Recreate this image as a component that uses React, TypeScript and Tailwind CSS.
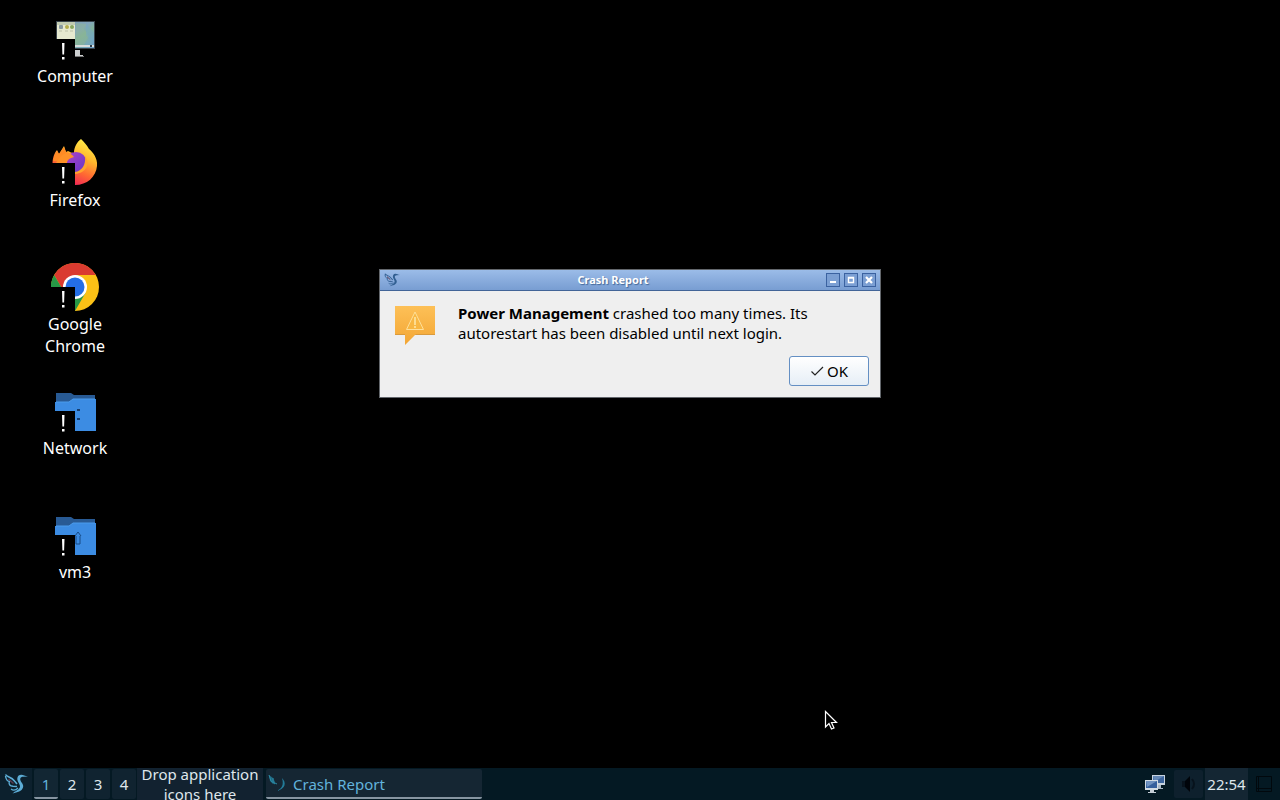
import type { ReactNode } from 'react';

function Bird({ className }: { className: string }) {
  return (
    <svg viewBox="0 0 24 24" className={className} fill="none" aria-hidden="true">
      <path d="M24 4.500L19.500 4.700C16.500 4.800 15.800 6.300 16.500 8.500C17.500 11 20 12.500 19 15.500C17.800 19.500 13.500 20 8.500 21.500C11 19 14.800 18 15.800 15.500C16.700 13 14.500 11.500 13.600 8.500C12.700 5.500 14.200 2.500 17.300 2.700C19.500 2.800 20.800 4 24 4.500Z" fill="currentColor" />
      <path d="M1.500 2.500C3 5.500 7 4.500 10.500 9L13 12" stroke="currentColor" strokeWidth="1.600" />
      <path d="M1.500 4C2 8 3 9 5.500 9.500C4 12 6 14 9 14.300L13 14.500" stroke="currentColor" strokeWidth="1.400" />
      <path d="M4.500 7L9.500 11.500" stroke="#5d394d" strokeWidth="1.500" />
      <path d="M7 17C9 18.500 12 18 14 16" stroke="currentColor" strokeWidth="1.200" />
    </svg>
  );
}

function Untrusted() {
  return (
    <>
      <rect x="0" y="24" width="24" height="24" fill="#000" />
      <path d="M11 28H13.500L13.100 39.500H11.400ZM11 42H13.500V44.500H11Z" fill="#fff" />
    </>
  );
}

function Icon({ children }: { children: ReactNode }) {
  return (
    <svg viewBox="0 0 48 48" className="size-12 shrink-0" aria-hidden="true">
      {children}
      <Untrusted />
    </svg>
  );
}

function ComputerIcon() {
  return (
    <Icon>
      <defs>
        <linearGradient id="screen" x1="0" y1="0" x2="1" y2="1">
          <stop offset="0" stopColor="#7f9fae" />
          <stop offset=".45" stopColor="#83a5bd" />
          <stop offset=".6" stopColor="#82b29c" />
          <stop offset="1" stopColor="#6fa2cf" />
        </linearGradient>
      </defs>
      <rect x="5" y="6" width="39" height="28" fill="#39434c" />
      <rect x="6" y="7" width="37" height="26" fill="url(#screen)" />
      <path d="M25 8L36 9L33 14L38 21L33 30H24Z" fill="#91b991" opacity=".45" />
      <path d="M35 8L43 18V30L35 20Z" fill="#71a5ce" opacity=".4" />
      <rect x="6" y="7" width="18" height="18" fill="#e6e9cf" />
      <rect x="6" y="7" width="18" height="3" fill="#c2ccb2" />
      <rect x="8" y="10" width="4" height="4" rx="1" fill="#8899a0" />
      <rect x="14" y="10" width="4" height="4" rx="2" fill="#b4ad4d" />
      <rect x="19" y="10" width="4" height="4" rx="2" fill="#8aa860" />
      <path d="M8 16H11M14 16H17M19 16H22" stroke="#bcc1a8" />
      <rect x="24" y="30" width="19" height="2" fill="#d7dddd" />
      <rect x="39" y="30" width="2" height="2" fill="#303d48" />
      <path d="M24 35H29V40H32V42H24Z" fill="#cdd0d1" />
      <path d="M24 41H33V42H24Z" fill="#777" />
    </Icon>
  );
}

function FirefoxIcon() {
  return (
    <Icon>
      <defs>
        <linearGradient id="flame" x1=".75" y1="0" x2=".3" y2="1">
          <stop offset="0" stopColor="#fff04a" />
          <stop offset=".35" stopColor="#ffb82d" />
          <stop offset=".65" stopColor="#ff6932" />
          <stop offset="1" stopColor="#ed145f" />
        </linearGradient>
        <linearGradient id="globe" x1="0" y1="0" x2="1" y2="1">
          <stop offset="0" stopColor="#ad42c9" />
          <stop offset="1" stopColor="#6237c6" />
        </linearGradient>
      </defs>
      <path d="M30 0C33 3 36 6 38 10C41 12 47 19 46 27C45 38 36 46 24 46C11 46 1 37 1.500 24C1.700 18 4 13 6 11L8 15L13 7L15 13L17 12C19 13 21 14 23 14C23 8 26 3 30 0Z" fill="url(#flame)" />
      <path d="M2 22C3 18 4 15 6 12L8 15L13 8L15 13C18 14 21 15 23 18L20 23Z" fill="#ff8b25" />
      <circle cx="25" cy="23.500" r="10.500" fill="url(#globe)" />
      <path d="M13 15C16 13 20 14 23 18C19 19 16 21 16 24H5C7 20 10 17 13 15Z" fill="#ff9228" />
      <path d="M34 17C40 25 35 34 24 35V33C31 32 35 26 34 17Z" fill="#ffa42d" />
    </Icon>
  );
}

function ChromeIcon() {
  return (
    <Icon>
      <circle cx="24" cy="24" r="24" fill="#fbc116" />
      <path d="M24 24V12H44.800A24 24 0 0 0 3.200 12L13.600 30Z" fill="#da3b30" />
      <path d="M24 24L13.600 30L3.200 12A24 24 0 0 0 24 48L34.400 30Z" fill="#279847" />
      <circle cx="24" cy="24" r="12" fill="#fff" />
      <circle cx="24" cy="24" r="9.500" fill="#246ee6" />
    </Icon>
  );
}

function FolderIcon({ home = false }: { home?: boolean }) {
  return (
    <Icon>
      <path d="M5 6H20L23 8H44V22H5Z" fill="#285a94" />
      <path d="M4 15H18L22 12H45V44H4Z" fill="#3c8ce3" />
      <path d="M5 15H18L22 12H44" fill="none" stroke="#4b9bec" />
      {home ? (
        <path d="M24 25L27 21L30 25M25 25V33H29V25" fill="none" stroke="#174b86" />
      ) : (
        <path d="M26 22H29V24H26ZM26 31H29V33H26Z" fill="#153d70" />
      )}
    </Icon>
  );
}

function Launcher({ label, children }: { label: string; children: ReactNode }) {
  return (
    <a href="#" className="flex h-[124px] flex-col items-center gap-[2px] text-center text-base leading-[22px] text-white">
      {children}
      <span className="w-20">{label}</span>
    </a>
  );
}

function WindowButton({ label, children }: { label: string; children: ReactNode }) {
  return (
    <button aria-label={label} className="flex size-[14px] items-center justify-center border border-[#3b62a0] bg-[#7b9fd3]">
      <svg viewBox="0 0 12 12" className="size-3 shrink-0" fill="none" stroke="#fff" aria-hidden="true">
        {children}
      </svg>
    </button>
  );
}

function CrashDialog() {
  return (
    <section role="dialog" aria-labelledby="crash-title" className="absolute left-[379px] top-[269px] w-[502px] border border-[#63676c] bg-[#efefef] text-black">
      <header className="flex h-[21px] items-center border-b border-[#426497] bg-linear-to-b from-[#9bbce8] to-[#789dd2] px-1">
        <Bird className="size-4 text-[#315f91]" />
        <h1 id="crash-title" className="flex-1 text-center text-[11px] font-bold leading-4 text-white [text-shadow:1px_1px_1px_#436899]">Crash Report</h1>
        <div className="flex gap-1">
          <WindowButton label="Minimize"><path d="M3 8H9" strokeWidth="2" /></WindowButton>
          <WindowButton label="Maximize"><path d="M3.500 3.500H8.500V8.500H3.500ZM3 4H9" strokeWidth="1.400" /></WindowButton>
          <WindowButton label="Close"><path d="M3 3L9 9M9 3L3 9" strokeWidth="2.200" /></WindowButton>
        </div>
      </header>
      <div className="px-[11px] pb-[11px] pt-3">
        <div className="flex gap-[19px]">
          <svg viewBox="0 0 48 48" className="size-12 shrink-0" aria-hidden="true">
            <defs>
              <linearGradient id="bubble" x1="0" y1="0" x2="0" y2="1">
                <stop offset="0" stopColor="#fdc057" />
                <stop offset="1" stopColor="#f3a634" />
              </linearGradient>
            </defs>
            <path d="M4 3H44V32H24L14 42V32H4Z" fill="url(#bubble)" />
            <path d="M4 31H14V32H4ZM25 31H44V32H24Z" fill="#d99a3d" />
            <path d="M24 9L32.500 26.500H15.500Z" fill="#f8b743" stroke="#ffe09a" />
            <path d="M24 14V22M24 23V25" stroke="#fff0b9" strokeWidth="1.300" />
          </svg>
          <p className="w-[380px] text-[15px] leading-5"><strong>Power Management</strong> crashed too many times. Its autorestart has been disabled until next login.</p>
        </div>
        <div className="mt-[5px] flex justify-end">
          <button className="flex h-[30px] w-20 items-center justify-center gap-[3px] rounded-[3px] border border-[#648fc3] bg-linear-to-b from-white to-[#e6eef6] text-[15px] leading-5">
            <svg viewBox="0 0 14 14" className="size-[14px]" fill="none" stroke="#222" strokeWidth="1.200" aria-hidden="true"><path d="M1.500 7.500L5 11L13 3" /></svg>
            OK
          </button>
        </div>
      </div>
    </section>
  );
}

function NetworkTray() {
  return (
    <svg viewBox="0 0 22 22" className="size-[22px]" aria-hidden="true">
      <path d="M8 2H21V12H8Z" fill="#c7d3df" />
      <path d="M9 3H20V10H9Z" fill="#3c659e" />
      <path d="M9 3H20L10 9Z" fill="#6387b5" />
      <path d="M13 12H17V15H19V16H12Z" fill="#aab8c6" />
      <path d="M1 7H14V17H1Z" fill="#d0dae3" />
      <path d="M2 8H13V15H2Z" fill="#345f9d" />
      <path d="M2 8H13L3 14Z" fill="#6e91c0" />
      <path d="M6 17H10V19H12V20H4V19H6Z" fill="#c5cdd5" />
    </svg>
  );
}

function Taskbar() {
  return (
    <footer className="flex h-8 shrink-0 items-center overflow-hidden bg-[#041923] text-[15px] leading-5 text-[#dfe7ec]">
      <button aria-label="Application menu" className="flex h-8 w-8 items-center justify-center bg-[#0c202d]">
        <Bird className="size-6 text-[#5cacd5]" />
      </button>
      <nav aria-label="Workspaces" className="ml-[2px] flex gap-[2px]">
        {['1', '2', '3', '4'].map((desk) => (
          <button key={desk} className={desk === '1' ? 'h-[30px] w-6 rounded-[2px] border-b-2 border-[#8795a1] bg-[#122633] pt-[2px] text-[#62b3dc]' : 'h-[30px] w-6 rounded-[2px] bg-[#102330]'}>{desk}</button>
        ))}
      </nav>
      <div className="ml-px flex h-8 w-[126px] items-center justify-center bg-[#122230] text-center">
        <span>Drop application<br />icons here</span>
      </div>
      <button className="ml-[3px] flex h-[30px] w-[216px] items-center gap-[5px] rounded-[2px] border-b-2 border-[#8795a1] bg-[#152633] px-[2px] pt-[2px] text-left text-[#62b3dc]">
        <svg viewBox="0 0 20 20" className="size-5" fill="none" aria-hidden="true">
          <path d="M1 1L5 4L7 8L5 10L2 7Z" fill="#237c99" opacity=".8" />
          <path d="M1 1L3 7L7 10M5 4L5 8L9 10" stroke="#2a8aa5" />
          <path d="M14 4C19 9 17 15 9 17C14 14 16 11 14 4Z" fill="#237c99" />
        </svg>
        Crash Report
      </button>
      <div className="ml-auto flex h-8 items-center">
        <NetworkTray />
        <button aria-label="Volume" className="ml-2 flex h-[28px] w-[29px] items-center justify-center rounded-[2px] bg-[#0e202d]">
          <svg viewBox="0 0 20 20" className="size-5" aria-hidden="true">
            <path d="M3 7H6V13H3Z" fill="#07121c" />
            <path d="M6 7L11 2V18L6 13Z" fill="#00040a" />
            <path d="M13 5Q17 10 13 15" fill="none" stroke="#07121c" strokeWidth="2" />
          </svg>
        </button>
        <time className="ml-[2px] flex h-8 w-[43px] items-center justify-center bg-[#142633]">22:54</time>
        <button aria-label="Show desktop" className="flex h-8 w-8 items-center justify-center">
          <svg viewBox="0 0 18 18" className="size-[18px]" fill="none" stroke="#01080d" aria-hidden="true"><path d="M1.500 1.500H16.500V16.500H1.500ZM1 13.500H17M3.500 1V17" /></svg>
        </button>
      </div>
    </footer>
  );
}

export default function App() {
  return (
    <div className="relative flex min-h-screen flex-col overflow-hidden bg-black font-['Noto_Sans',sans-serif]">
      <main className="flex-1 px-[15px] pt-[15px]">
        <nav aria-label="Desktop" className="flex w-[120px] flex-col">
          <Launcher label="Computer"><ComputerIcon /></Launcher>
          <Launcher label="Firefox"><FirefoxIcon /></Launcher>
          <Launcher label="Google Chrome"><ChromeIcon /></Launcher>
          <Launcher label="Network"><FolderIcon /></Launcher>
          <Launcher label="vm3"><FolderIcon home /></Launcher>
        </nav>
      </main>
      <CrashDialog />
      <Taskbar />
      <svg viewBox="0 0 14 22" className="pointer-events-none absolute left-[824px] top-[710px] h-[22px] w-[14px]" aria-hidden="true">
        <path d="M1.500 1.500V17L5 13.500L7.500 19L10 18L7.500 12.500H12.500Z" fill="#000" stroke="#fff" strokeWidth="1.200" />
      </svg>
    </div>
  );
}
